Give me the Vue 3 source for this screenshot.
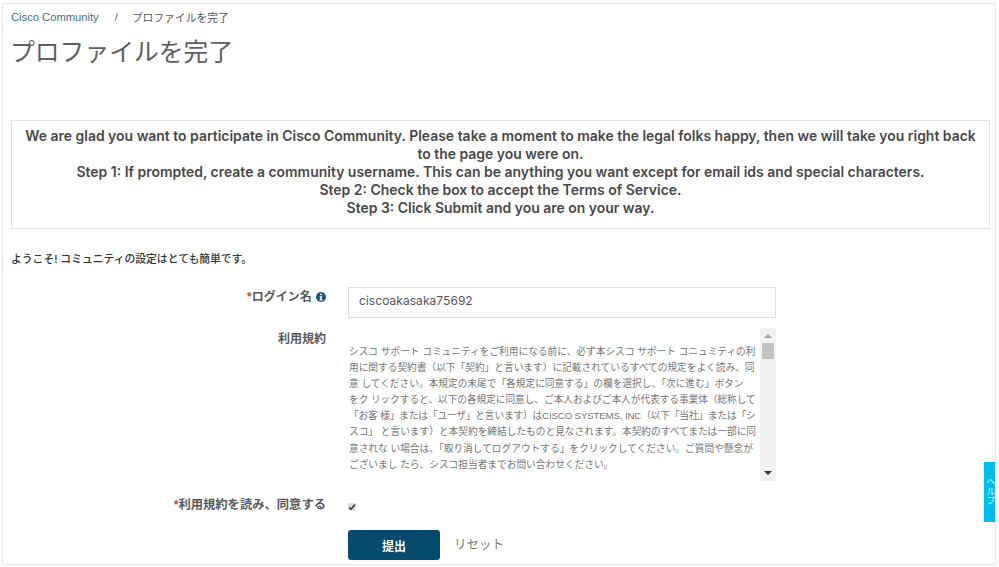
<script setup>
const steps = [
  'We are glad you want to participate in Cisco Community. Please take a moment to make the legal folks happy, then we will take you right back to the page you were on.',
  'Step 1: If prompted, create a community username. This can be anything you want except for email ids and special characters.',
  'Step 2: Check the box to accept the Terms of Service.',
  'Step 3: Click Submit and you are on your way.',
]
const terms = [
  'シスコ サポート コミュニティをご利用になる前に、必ず本シスコ サポート コニュミティの利',
  '用に関する契約書（以下「契約」と言います）に記載されているすべての規定をよく読み、同',
  '意 してください。本規定の末尾で「各規定に同意する」の欄を選択し、「次に進む」ボタン',
  'をク リックすると、以下の各規定に同意し、ご本人およびご本人が代表する事業体（総称して',
  '「お客 様」または「ユーザ」と言います）はCISCO SYSTEMS, INC（以下「当社」または「シ',
  'スコ」 と言います）と本契約を締結したものと見なされます。本契約のすべてまたは一部に同',
  '意されな い場合は、「取り消してログアウトする」をクリックしてください。ご質問や懸念が',
  'ございまし たら、シスコ担当者までお問い合わせください。',
]
</script>

<template>
  <div class="page">
    <nav class="crumbs">
      <a class="crumb-link">Cisco Community</a>
      <span class="sep">/</span>
      <span>プロファイルを完了</span>
    </nav>
    <h1 class="title">プロファイルを完了</h1>
    <div class="notice">
      <p v-for="s in steps" :key="s">{{ s }}</p>
    </div>
    <p class="welcome">ようこそ! コミュニティの設定はとても簡単です。</p>
    <form class="form" @submit.prevent>
      <label class="label login-label"><span class="req">*</span>ログイン名
        <svg class="info" viewBox="0 0 10 10" width="10" height="10"><circle cx="5" cy="5" r="5" fill="#1f5a7d"/><rect x="4.2" y="1.6" width="1.6" height="1.5" fill="#fff"/><path d="M3.6 4h2.2v3.6h.8v.8H3.5v-.8h.8V4.8h-.7z" fill="#fff"/></svg>
      </label>
      <div class="input">ciscoakasaka75692</div>
      <div class="label terms-label">利用規約</div>
      <div class="terms">
        <div class="terms-text">
          <p v-for="t in terms" :key="t">{{ t }}</p>
        </div>
        <div class="scrollbar">
          <span class="arrow up"></span>
          <span class="thumb"></span>
          <span class="arrow down"></span>
        </div>
      </div>
      <label class="label agree-label"><span class="req">*</span>利用規約を読み、同意する</label>
      <div class="agree"><span class="check"><svg viewBox="0 0 8 8" width="8" height="8"><path d="M1.2 4.2l1.9 2L6.9 1.6" fill="none" stroke="#333" stroke-width="1.5"/></svg></span></div>
      <div class="actions">
        <button class="submit" type="submit">提出</button>
        <button class="reset" type="reset">リセット</button>
      </div>
    </form>
    <div class="tab"><span>ヘルプ</span></div>
  </div>
</template>

<style scoped>
.page {
  position: relative;
  box-sizing: border-box;
  width: 994px;
  height: 562px;
  margin: 3px 0 0 2px;
  padding: 6px 5px 0 8px;
  border: 1px solid #e3e7ec;
  background: #fff;
  overflow: hidden;
  font-family: "Liberation Sans", "Noto Sans CJK JP", sans-serif;
  color: #58585b;
}
.crumbs {
  display: flex;
  align-items: center;
  height: 14px;
  font-size: 10.8px;
  color: #58585b;
}
.crumb-link { color: #3f6f8f; font-size: 11.2px; }
.sep { margin: 0 14px 0 16px; }
.title {
  margin: 13px 0 0 -1px;
  font-size: 24.8px;
  line-height: 32px;
  font-weight: 400;
  color: #5f5f62;
}
.notice {
  box-sizing: border-box;
  height: 109px;
  margin-top: 51px;
  padding: 6px 8px;
  border: 1px solid #dfe1e3;
  text-align: center;
  font-family: Inter, "Noto Sans CJK JP", sans-serif;
  font-size: 13.96px;
  line-height: 18px;
  font-weight: 600;
  color: #484848;
}
.notice p { margin: 0; }
.welcome {
  margin: 24px 0 0;
  font-family: Inter, "Noto Sans CJK JP", sans-serif;
  font-size: 10.8px;
  line-height: 14px;
  font-weight: 500;
  color: #333;
}
.form {
  display: grid;
  grid-template-columns: 315px 428px;
  column-gap: 22px;
  margin-top: 20px;
  align-items: start;
}
.label {
  text-align: right;
  font-size: 12px;
  line-height: 16px;
  font-weight: 700;
  color: #58585b;
  white-space: nowrap;
}
.req { color: #c8502e; }
.login-label { margin-top: 2px; }
.info { vertical-align: -1px; margin-left: 1px; }
.input {
  box-sizing: border-box;
  height: 31px;
  padding: 0 10px;
  border: 1px solid #dcdfe2;
  font-family: Inter, sans-serif;
  font-size: 12px;
  line-height: 25px;
  letter-spacing: 0.05px;
  color: #58585b;
}
.terms-label { margin-top: 13px; }
.terms {
  display: flex;
  height: 153px;
  margin: 10px 0 0 -8px;
}
.terms-text {
  flex: 1;
  box-sizing: border-box;
  padding: 16px 0 0 9px;
  font-size: 9.7px;
  line-height: 16.1px;
  color: #757575;
  white-space: nowrap;
  overflow: hidden;
}
.terms-text p { margin: 0; }
.terms-text p:nth-child(5) { letter-spacing: -0.15px; }
.terms-text p:nth-child(4) { letter-spacing: -0.05px; }
.scrollbar {
  display: flex;
  flex-direction: column;
  align-items: center;
  width: 16px;
  background: #f1f1f1;
}
.arrow { width: 0; height: 0; border-left: 4px solid transparent; border-right: 4px solid transparent; }
.arrow.up { margin-top: 6px; border-bottom: 4px solid #a3a3a3; }
.thumb { width: 12px; height: 16px; margin-top: 5px; background: #c1c1c1; }
.arrow.down { margin-top: auto; margin-bottom: 6px; border-top: 4px solid #333; }
.agree-label { margin-top: 16px; font-size: 12.3px; }
.agree { margin-top: 22px; }
.check {
  display: flex;
  align-items: center;
  justify-content: center;
  width: 8px;
  height: 8px;
  border-radius: 2px;
  background: #dcdcdc;
}
.actions {
  grid-column: 2;
  display: flex;
  align-items: center;
  margin-top: 17px;
}
.submit {
  width: 92px;
  height: 30px;
  border: 0;
  border-radius: 3px;
  background: #064a6e;
  color: #fff;
  font-family: inherit;
  font-size: 12px;
  font-weight: 700;
}
.reset {
  margin: 0 0 4px 14px;
  padding: 0;
  border: 0;
  background: none;
  font-family: inherit;
  font-size: 12.5px;
  color: #7a7a7a;
}
.tab {
  position: absolute;
  right: 0;
  top: 458px;
  width: 11px;
  height: 60px;
  background: #00bceb;
}
.tab span {
  position: absolute;
  left: 1px;
  top: 15px;
  writing-mode: vertical-rl;
  font-size: 9.4px;
  line-height: 10px;
  color: #d8f6ff;
  white-space: nowrap;
}
</style>
